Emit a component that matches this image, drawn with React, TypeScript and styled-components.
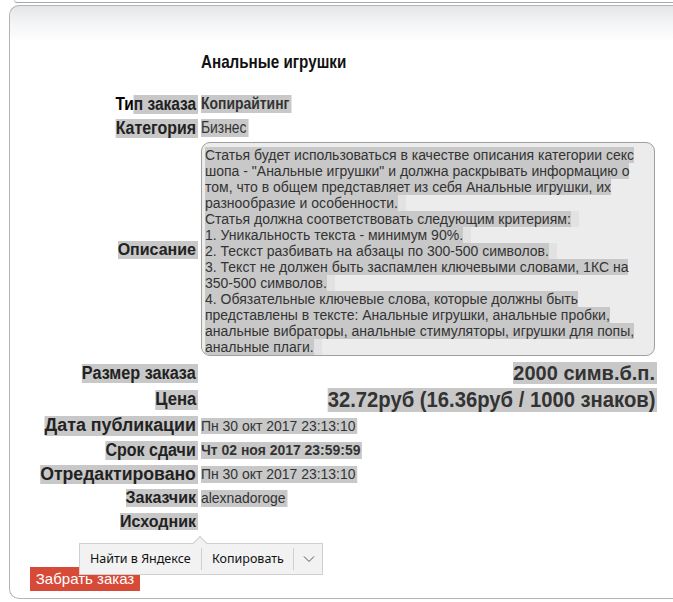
import styled, { createGlobalStyle } from "styled-components";

const Global = createGlobalStyle`
  html, body {
    margin: 0;
    padding: 0;
    background: #ffffff;
  }
  body {
    font-family: "Liberation Sans", Arial, sans-serif;
    color: #222;
    width: 673px;
    height: 602px;
    overflow: hidden;
    position: relative;
  }
`;

const TopEdge = styled.div`
  height: 2px;
  margin-left: 14px;
  border-bottom: 1px solid #a9a9a9;
  border-left: 1px solid #c8c8c8;
  border-bottom-left-radius: 4px;
`;

const Panel = styled.div`
  margin-top: 2px;
  margin-left: 9px;
  height: 594px;
  border: 1px solid #b4b4b4;
  border-right: none;
  border-radius: 10px 0 0 10px;
  background: linear-gradient(#e4e6e8 0px, #f4f5f6 18px, #ffffff 36px);
  box-sizing: border-box;
`;

const Table = styled.div`
  display: grid;
  grid-template-columns: 188px 456px;
  column-gap: 3px;
  margin-top: 44px;
`;

const Row = styled.div<{ $h: number }>`
  display: contents;
  & > * {
    height: ${(p) => p.$h}px;
  }
`;

const LabelCell = styled.div<{ $size?: number }>`
  display: flex;
  align-items: center;
  justify-content: flex-end;
  font-weight: bold;
  font-size: ${(p) => p.$size ?? 16}px;
  color: #222;
  white-space: nowrap;
`;

const ValueCell = styled.div<{ $size?: number; $bold?: boolean; $right?: boolean }>`
  display: flex;
  align-items: center;
  justify-content: ${(p) => (p.$right ? "flex-end" : "flex-start")};
  font-weight: ${(p) => (p.$bold ? "bold" : "normal")};
  font-size: ${(p) => p.$size ?? 15}px;
  color: #333;
  white-space: nowrap;
`;

const Narrow = styled.span<{ $right?: boolean; $k?: number }>`
  display: inline-block;
  transform: scaleX(${(p) => p.$k ?? 0.82});
  transform-origin: ${(p) => (p.$right ? "right" : "left")} center;
`;

const Sel = styled.span`
  display: inline-block;
  line-height: 1.1;
  background: #c8c8c8;
  padding-right: 2px;
`;

const Plain = styled.span`
  color: #000;
`;

const Heading = styled.div`
  font-weight: bold;
  font-size: 19px;
  color: #111;
  display: flex;
  align-items: center;
`;

const Spacer = styled.div``;

const DescWrap = styled.div`
  display: flex;
  align-items: flex-start;
  padding-top: 2px;
  box-sizing: border-box;
`;

const DescBox = styled.div`
  width: 454px;
  height: 214px;
  box-sizing: border-box;
  border: 1px solid #a0a0a0;
  border-radius: 9px;
  background: #ececec;
  padding: 4px 3px;
  font-size: 14px;
  line-height: 16px;
  color: #333;
`;

const Line = styled.div`
  white-space: nowrap;
  & > span {
    background: #c8c8c8;
  }
`;

const Gap = styled.i`
  display: inline-block;
  width: 8px;
  height: 16px;
  vertical-align: top;
  background: #e2e2e2;
`;

const TakeButton = styled.button`
  display: block;
  margin: 34px 0 0 20px;
  width: 110px;
  height: 24px;
  padding: 0;
  border: none;
  background: #d74a37;
  color: #fff;
  font-family: "Liberation Sans", Arial, sans-serif;
  font-size: 15px;
  line-height: 24px;
  text-align: center;
`;

const Popup = styled.div`
  position: absolute;
  left: 79px;
  top: 543px;
  height: 32px;
  box-sizing: border-box;
  border: 1px solid #cfcfcf;
  background: #f2f2f2;
  display: flex;
  align-items: center;
  font-family: "Noto Sans", "Open Sans", sans-serif;
  font-size: 12.5px;
  color: #111;
  z-index: 2;
  &::before {
    content: "";
    position: absolute;
    top: -6px;
    left: 115px;
    width: 9px;
    height: 9px;
    background: #f2f2f2;
    border-left: 1px solid #cfcfcf;
    border-top: 1px solid #cfcfcf;
    transform: rotate(45deg);
  }
`;

const PopItem = styled.div<{ $w: number }>`
  position: relative;
  width: ${(p) => p.$w}px;
  box-sizing: border-box;
  padding-left: 10px;
  height: 22px;
  line-height: 22px;
  white-space: nowrap;
  & + & {
    border-left: 1px solid #d0d0d0;
  }
`;

const descLines: { text: string; gap?: boolean }[] = [
  { text: "Статья будет использоваться в качестве описания категории секс" },
  { text: "шопа - \"Анальные игрушки\" и должна раскрывать информацию о" },
  { text: "том, что в общем представляет из себя Анальные игрушки, их" },
  { text: "разнообразие и особенности.", gap: true },
  { text: "Статья должна соответствовать следующим критериям:", gap: true },
  { text: "1. Уникальность текста - минимум 90%.", gap: true },
  { text: "2. Тескст разбивать на абзацы по 300-500 символов.", gap: true },
  { text: "3. Текст не должен быть заспамлен ключевыми словами, 1КС на" },
  { text: "350-500 символов.", gap: true },
  { text: "4. Обязательные ключевые слова, которые должны быть" },
  { text: "представлены в тексте: Анальные игрушки, анальные пробки," },
  { text: "анальные вибраторы, анальные стимуляторы, игрушки для попы," },
  { text: "анальные плаги.", gap: true },
];

function App() {
  return (
    <>
      <Global />
      <TopEdge />
      <Panel>
        <Table>
          <Row $h={24}>
            <Spacer />
            <Heading>
              <Narrow $k={0.8}>Анальные игрушки</Narrow>
            </Heading>
          </Row>
          <Row $h={18}>
            <Spacer />
            <Spacer />
          </Row>
          <Row $h={24}>
            <LabelCell $size={18}>
              <Narrow $right $k={0.86}>
                <Plain>Ти</Plain>
                <Sel>п заказа</Sel>
              </Narrow>
            </LabelCell>
            <ValueCell $bold $size={16}>
              <Narrow $k={0.87}>
                <Sel>Копирайтинг</Sel>
              </Narrow>
            </ValueCell>
          </Row>
          <Row $h={24}>
            <LabelCell $size={18}>
              <Narrow $right $k={0.885}>
                <Sel>Категория</Sel>
              </Narrow>
            </LabelCell>
            <ValueCell $size={16}>
              <Narrow $k={0.865}>
                <Sel>Бизнес</Sel>
              </Narrow>
            </ValueCell>
          </Row>
          <Row $h={220}>
            <LabelCell $size={16}>
              <Sel>Описание</Sel>
            </LabelCell>
            <DescWrap>
              <DescBox>
                {descLines.map((l, i) => (
                  <Line key={i}>
                    <span>{l.text}</span>
                    {l.gap && <Gap />}
                  </Line>
                ))}
              </DescBox>
            </DescWrap>
          </Row>
          <Row $h={26}>
            <LabelCell $size={18}>
              <Narrow $right $k={0.9}>
                <Sel>Размер заказа</Sel>
              </Narrow>
            </LabelCell>
            <ValueCell $bold $size={20} $right>
              <Sel>2000 симв.б.п.</Sel>
            </ValueCell>
          </Row>
          <Row $h={27}>
            <LabelCell $size={18}>
              <Narrow $right $k={0.93}>
                <Sel>Цена</Sel>
              </Narrow>
            </LabelCell>
            <ValueCell $bold $size={22} $right>
              <Narrow $right $k={0.92}>
                <Sel>32.72руб (16.36руб / 1000 знаков)</Sel>
              </Narrow>
            </ValueCell>
          </Row>
          <Row $h={25}>
            <LabelCell $size={18}>
              <Narrow $right $k={0.99}>
                <Sel>Дата публикации</Sel>
              </Narrow>
            </LabelCell>
            <ValueCell $size={15}>
              <Narrow $k={0.93}>
                <Sel>Пн 30 окт 2017 23:13:10</Sel>
              </Narrow>
            </ValueCell>
          </Row>
          <Row $h={24}>
            <LabelCell $size={18}>
              <Narrow $right $k={0.89}>
                <Sel>Срок сдачи</Sel>
              </Narrow>
            </LabelCell>
            <ValueCell $bold $size={15}>
              <Narrow $k={0.93}>
                <Sel>Чт 02 ноя 2017 23:59:59</Sel>
              </Narrow>
            </ValueCell>
          </Row>
          <Row $h={24}>
            <LabelCell $size={18}>
              <Narrow $right $k={0.98}>
                <Sel>Отредактировано</Sel>
              </Narrow>
            </LabelCell>
            <ValueCell $size={15}>
              <Narrow $k={0.93}>
                <Sel>Пн 30 окт 2017 23:13:10</Sel>
              </Narrow>
            </ValueCell>
          </Row>
          <Row $h={24}>
            <LabelCell $size={16}>
              <Sel>Заказчик</Sel>
            </LabelCell>
            <ValueCell $size={15}>
              <Narrow $k={0.93}>
                <Sel>alexnadoroge</Sel>
              </Narrow>
            </ValueCell>
          </Row>
          <Row $h={23}>
            <LabelCell $size={16}>
              <Sel>Исходник</Sel>
            </LabelCell>
            <Spacer />
          </Row>
        </Table>
        <TakeButton>Забрать заказ</TakeButton>
      </Panel>
      <Popup>
        <PopItem $w={121}>Найти в Яндексе</PopItem>
        <PopItem $w={92}>Копировать</PopItem>
        <PopItem $w={29}>
          <svg width="12" height="22" viewBox="0 0 12 22" style={{ display: "block", marginLeft: "-1px" }}>
            <path d="M1 8.5 L6 13.5 L11 8.5" fill="none" stroke="#555" strokeWidth="1" />
          </svg>
        </PopItem>
      </Popup>
    </>
  );
}

export default App;
